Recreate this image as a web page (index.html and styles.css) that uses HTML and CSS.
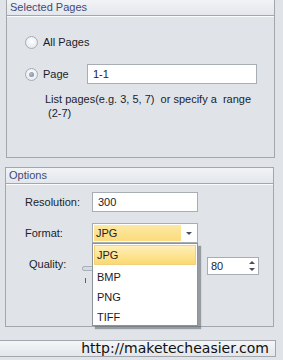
FILE: index.html
```html
<!DOCTYPE html>
<html lang="en">
<head>
  <meta charset="UTF-8">
  <title>Export Options</title>
  <link rel="stylesheet" href="styles.css">
</head>
<body>
  <div class="panel">

    <section class="group group-pages">
      <div class="group-title">Selected Pages</div>
      <div class="group-body">
        <div class="radio-row">
          <span class="radio"></span>
          <span class="radio-label">All Pages</span>
        </div>
        <div class="radio-row row-page">
          <span class="radio checked"></span>
          <span class="radio-label page-label">Page</span>
          <span class="field page-field">1-1</span>
        </div>
        <p class="hint">List pages(e.g. 3, 5, 7)  or specify a  range
 (2-7)</p>
      </div>
    </section>

    <section class="group group-options">
      <div class="group-title">Options</div>
      <div class="group-body">
        <div class="form-row">
          <span class="form-label">Resolution:</span>
          <span class="field res-field">300</span>
        </div>
        <div class="form-row row-format">
          <span class="form-label">Format:</span>
          <div class="combo">
            <span class="combo-value">JPG</span>
            <span class="combo-button"><span class="arrow-down"></span></span>
            <ul class="dropdown">
              <li class="selected">JPG</li>
              <li>BMP</li>
              <li>PNG</li>
              <li>TIFF</li>
            </ul>
          </div>
        </div>
        <div class="form-row row-quality">
          <span class="form-label quality-label">Quality:</span>
          <div class="slider">
            <span class="groove"></span>
            <span class="tick"></span>
          </div>
          <div class="spin">
            <span class="spin-value">80</span>
            <span class="spin-buttons">
              <span class="arrow-up"></span>
              <span class="arrow-down"></span>
            </span>
          </div>
        </div>
      </div>
    </section>

    <div class="status-bar">http://maketecheasier.com</div>
  </div>
</body>
</html>
```

FILE: styles.css
```css
body {
  margin: 0;
  background-color: #e0e4e9;
  font-family: 'Liberation Sans', Arial, sans-serif;
  font-size: 11px;
  color: #1c1c28;
}

.panel {
  width: 283px;
  height: 360px;
  overflow: hidden;
}

/* Group boxes */
.group {
  box-sizing: border-box;
  border: 1px solid #a2a7ad;
  background-color: #e0e4e9;
}

.group-pages {
  margin-left: 6px;
  width: 269px;
  height: 158px;
  border-top: none;
}

.group-options {
  margin-top: 9px;
  margin-left: 5px;
  width: 269px;
  height: 160px;
  position: relative;
}

.group-title {
  height: 15px;
  line-height: 15px;
  padding-left: 3px;
  border-bottom: 1px solid #a2a7ad;
  background: linear-gradient(#f1f3f6, #e3e7eb);
  color: #3e4a78;
  font-size: 11px;
}

.group-body {
  border-top: 1px solid #fbfcfd;
}

/* Selected pages */
.group-pages .group-body {
  padding: 15px 0 0 18px;
}

.radio-row {
  display: flex;
  align-items: center;
  height: 20px;
}

.row-page {
  margin-top: 12px;
}

.radio {
  box-sizing: border-box;
  width: 13px;
  height: 13px;
  border-radius: 50%;
  border: 1px solid #a7adb5;
  background: radial-gradient(circle at 50% 40%, #ffffff, #dfe3e8);
  display: flex;
  align-items: center;
  justify-content: center;
}

.radio.checked::after {
  content: "";
  width: 5px;
  height: 5px;
  border-radius: 50%;
  background: radial-gradient(circle at 40% 40%, #b4c0d0, #6f7e96);
}

.radio-label {
  margin-left: 5px;
}

.page-label {
  width: 44px;
}

.field {
  box-sizing: border-box;
  display: block;
  height: 20px;
  line-height: 18px;
  padding-left: 5px;
  border: 1px solid #a7adb5;
  background-color: #fff;
}

.page-field {
  width: 170px;
}

.hint {
  margin: 8px 0 0 20px;
  line-height: 14px;
  white-space: pre-wrap;
}

/* Options */
.group-options .group-body {
  padding: 7px 0 0 19px;
}

.form-row {
  display: flex;
  align-items: center;
  height: 20px;
}

.form-label {
  width: 67px;
}

.res-field {
  width: 106px;
}

.row-format {
  margin-top: 11px;
}

.combo {
  box-sizing: border-box;
  position: relative;
  width: 106px;
  height: 20px;
  border: 1px solid #a7adb5;
  background-color: #fff;
  display: flex;
  padding: 1px;
}

.combo-value {
  width: 85px;
  line-height: 16px;
  padding-left: 2px;
  background: linear-gradient(#fde9a4, #fbdb7c);
}

.combo-button {
  flex: 1;
  display: flex;
  align-items: center;
  justify-content: center;
}

.arrow-down,
.arrow-up {
  width: 0;
  height: 0;
  border-left: 3px solid transparent;
  border-right: 3px solid transparent;
}

.arrow-down {
  border-top: 3px solid #4a4f57;
}

.arrow-up {
  border-bottom: 3px solid #4a4f57;
}

.dropdown {
  position: absolute;
  top: 19px;
  left: -1px;
  z-index: 2;
  box-sizing: border-box;
  width: 106px;
  height: 83px;
  margin: 0;
  padding: 1px;
  list-style: none;
  border: 1px solid #8c939c;
  background-color: #fff;
  box-shadow: 3px 3px 1px rgba(90, 96, 104, 0.55);
}

.dropdown li {
  height: 20px;
  line-height: 20px;
  padding-left: 3px;
}

.dropdown li.selected {
  height: 18px;
  line-height: 18px;
  margin-bottom: 2px;
  border: 1px solid #f1d27a;
  padding-left: 2px;
  background: linear-gradient(#fff0b8, #fbd872);
}

.row-quality {
  margin-top: 14px;
  height: 18px;
}

.quality-label {
  width: 53px;
  padding-left: 4px;
  margin-top: -4px;
}

.slider {
  position: relative;
  width: 118px;
  height: 18px;
}

.groove {
  position: absolute;
  left: 0;
  top: 9px;
  width: 100px;
  height: 3px;
  border: 1px solid #a9b0b9;
  border-radius: 2px;
  background-color: #d6dbe1;
}

.tick {
  position: absolute;
  left: 3px;
  top: 21px;
  width: 1px;
  height: 5px;
  background-color: #5b6068;
}

.spin {
  box-sizing: border-box;
  width: 52px;
  height: 18px;
  margin-left: 7px;
  border: 1px solid #a7adb5;
  background-color: #fff;
  display: flex;
  align-items: center;
}

.spin-value {
  flex: 1;
  padding-left: 3px;
}

.spin-buttons {
  width: 12px;
  height: 14px;
  display: flex;
  flex-direction: column;
  align-items: center;
  justify-content: space-between;
  padding: 2px 0;
  box-sizing: border-box;
}

/* Status bar */
.status-bar {
  box-sizing: border-box;
  margin-top: 13px;
  width: 276px;
  height: 17px;
  padding-right: 6px;
  border-top: 1px solid #a2a7ad;
  border-bottom: 1px solid #a2a7ad;
  border-right: 1px solid #a2a7ad;
  background: linear-gradient(#f4f6f8, #e3e6ea);
  text-align: right;
  font-family: 'DejaVu Sans', sans-serif;
  font-size: 14px;
  line-height: 15px;
  color: #111;
}
```
